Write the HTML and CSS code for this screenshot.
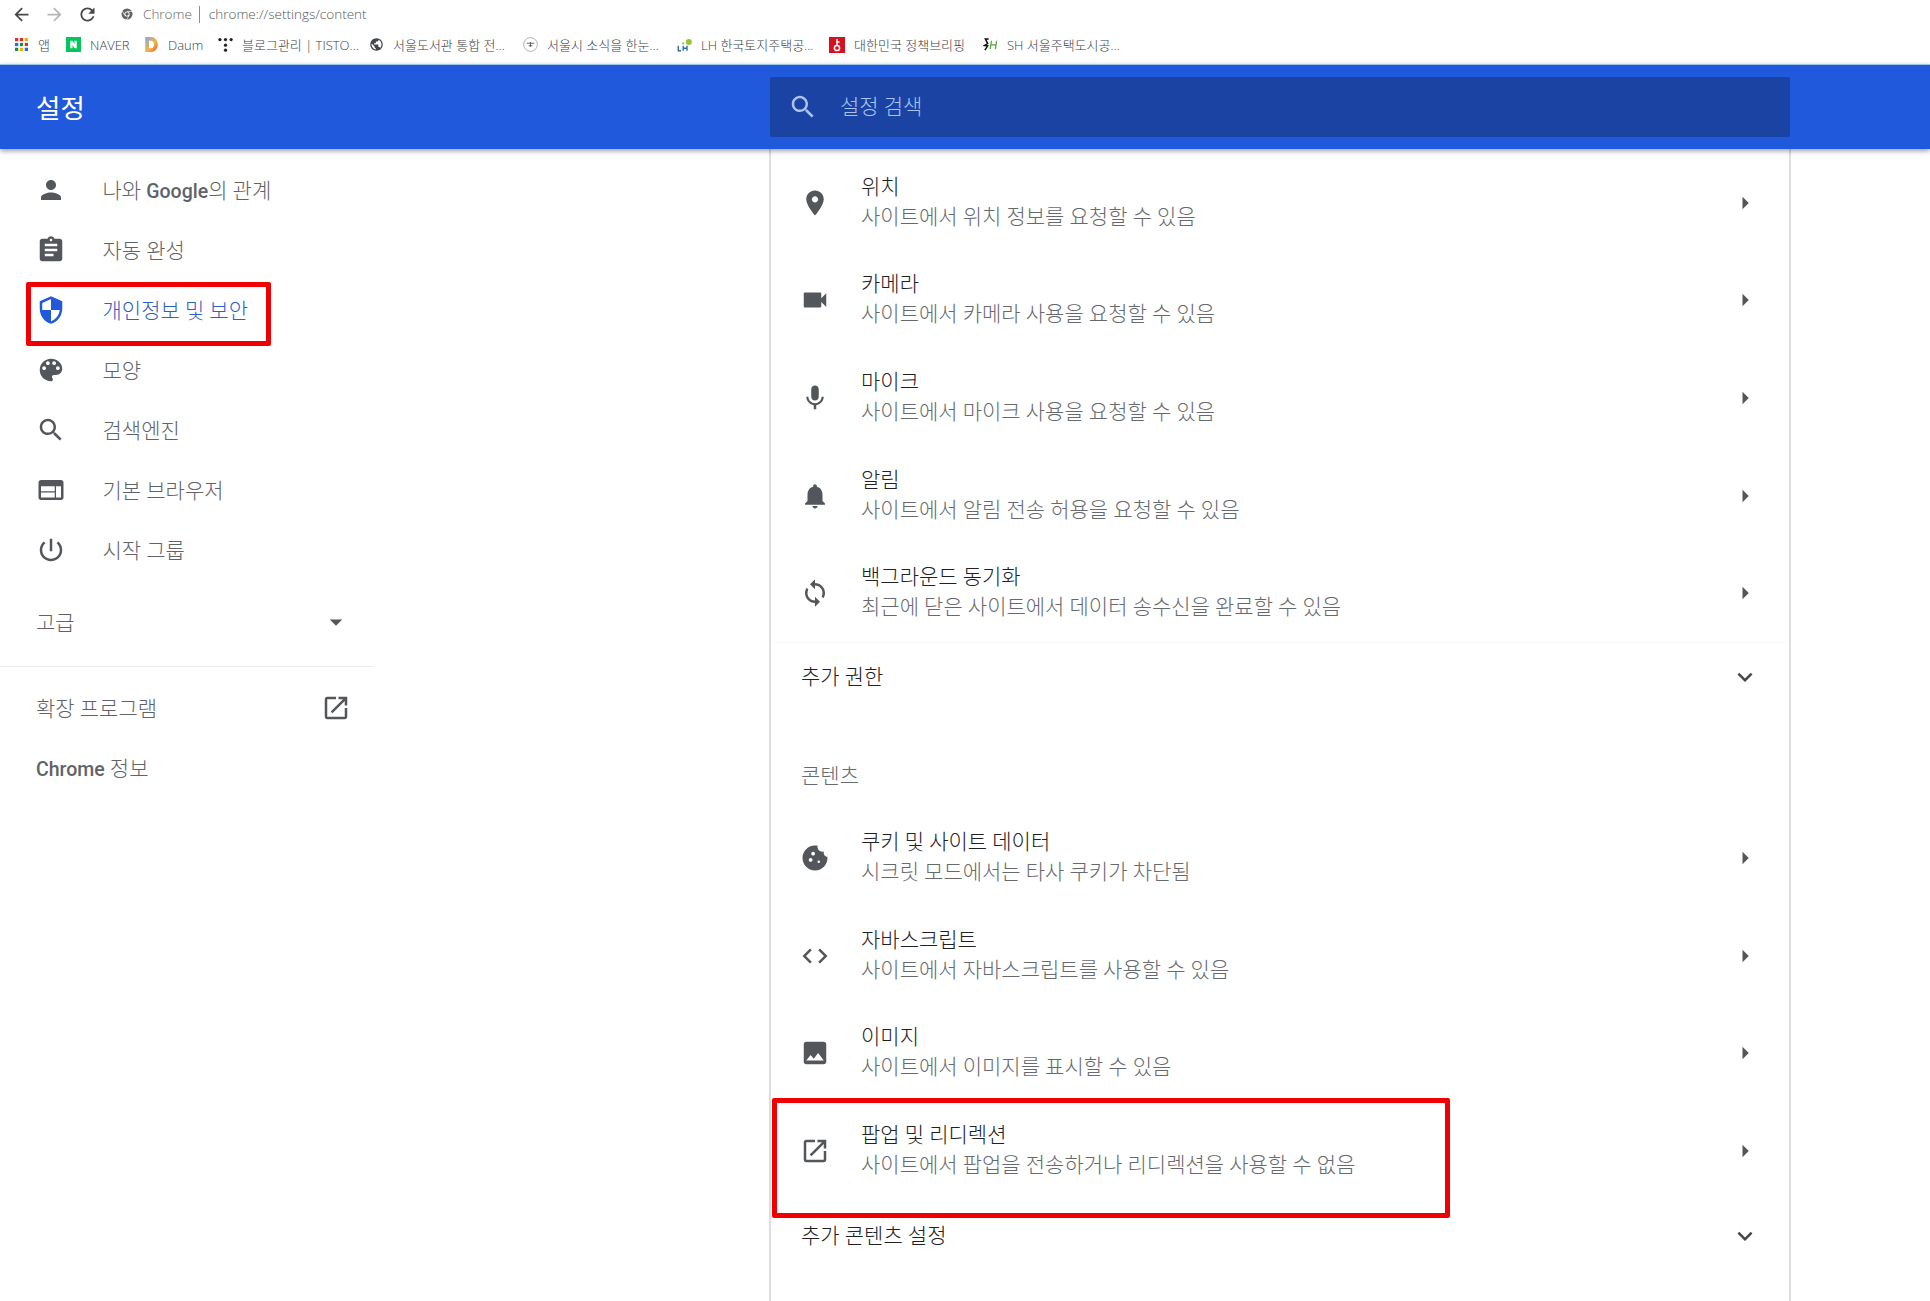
FILE: index.html
```html
<!DOCTYPE html>
<html lang="ko">
<head>
<meta charset="utf-8">
<title>설정</title>
<link rel="stylesheet" href="styles.css">
</head>
<body>
<div class="addressbar">
  <svg class="nav-ic" viewBox="0 0 24 24"><path d="M20 11H7.83l5.59-5.59L12 4l-8 8 8 8 1.41-1.41L7.83 13H20v-2z"/></svg>
  <svg class="nav-ic nav-off" viewBox="0 0 24 24"><path d="M12 4l-1.41 1.41L16.17 11H4v2h12.17l-5.58 5.59L12 20l8-8z"/></svg>
  <svg class="nav-ic" viewBox="0 0 24 24"><path d="M17.65 6.35C16.2 4.9 14.21 4 12 4c-4.42 0-7.99 3.58-7.99 8s3.57 8 7.99 8c3.73 0 6.84-2.55 7.73-6h-2.08c-.82 2.33-3.04 4-5.65 4-3.31 0-6-2.69-6-6s2.69-6 6-6c1.66 0 3.14.69 4.22 1.78L13 11h7V4l-2.35 2.35z"/></svg>
  <svg class="site-ic" viewBox="0 0 24 24"><circle cx="12" cy="12" r="11" fill="#5f6368"/><circle cx="12" cy="12" r="5.200" fill="#fff"/><circle cx="12" cy="12" r="3.400" fill="#5f6368"/><path d="M12 6.800h10.500M7.500 14.600L2.300 5.600M16.500 14.600L11.300 23.500" stroke="#fff" stroke-width="1.400"/></svg>
  <span class="site-name">Chrome</span>
  <span class="site-sep"></span>
  <span class="url">chrome://settings/content</span>
</div>
<div class="bookmarks">
  <span class="bm bm-apps">
    <svg class="fav fav-apps" viewBox="0 0 12 12"><rect x="0" y="0" width="3" height="3" fill="#d93025"/><rect x="4.500" y="0" width="3" height="3" fill="#d93025"/><rect x="9" y="0" width="3" height="3" fill="#f9ab00"/><rect x="0" y="4.500" width="3" height="3" fill="#1a73e8"/><rect x="4.500" y="4.500" width="3" height="3" fill="#1e8e3e"/><rect x="9" y="4.500" width="3" height="3" fill="#d93025"/><rect x="0" y="9" width="3" height="3" fill="#1e8e3e"/><rect x="4.500" y="9" width="3" height="3" fill="#f9ab00"/><rect x="9" y="9" width="3" height="3" fill="#1a73e8"/></svg>
    앱</span>
  <span class="bm bm-naver">
    <svg class="fav" viewBox="0 0 12 12"><rect width="12" height="12" fill="#03c75a"/><path d="M3.400 3h1.800l1.600 2.600V3h1.800v6H6.800L5.200 6.400V9H3.400z" fill="#fff"/></svg>
    NAVER</span>
  <span class="bm bm-daum">
    <svg class="fav" viewBox="0 0 12 12"><defs><linearGradient id="dg" x1="0" y1="0" x2="1" y2="1"><stop offset="0" stop-color="#7ea6ef"/><stop offset=".55" stop-color="#f4b53f"/><stop offset="1" stop-color="#e8574a"/></linearGradient></defs><path fill-rule="evenodd" d="M1 0h4.500C9 0 11 2.600 11 6s-2 6-5.500 6H1zM4 3v6h1.400C7 9 8 7.700 8 6S7 3 5.400 3z" fill="url(#dg)"/></svg>
    Daum</span>
  <span class="bm bm-tistory">
    <svg class="fav" viewBox="0 0 12 12" fill="#222"><circle cx="1.500" cy="2" r="1.300"/><circle cx="6" cy="2" r="1.300"/><circle cx="10.500" cy="2" r="1.300"/><circle cx="6" cy="6.500" r="1.300"/><circle cx="6" cy="10.500" r="1.300"/></svg>
    블로그관리 | TISTO...</span>
  <span class="bm bm-lib">
    <svg class="fav" viewBox="0 0 24 24"><path fill="#44474a" d="M12 2C6.480 2 2 6.480 2 12s4.480 10 10 10 10-4.480 10-10S17.520 2 12 2zm-1 17.930C7.050 19.440 4 16.080 4 12c0-.62.080-1.210.21-1.790L9 15v1c0 1.100.9 2 2 2v1.930zm6.900-2.540c-.26-.81-1-1.390-1.900-1.390h-1v-3c0-.55-.45-1-1-1H8v-2h2c.55 0 1-.45 1-1V7h2c1.100 0 2-.9 2-2v-.41c2.930 1.190 5 4.060 5 7.410 0 2.080-.8 3.970-2.100 5.390z"/></svg>
    서울도서관 통합 전...</span>
  <span class="bm bm-seoul">
    <svg class="fav" viewBox="0 0 24 24"><circle cx="12" cy="12" r="11" fill="none" stroke="#9a9a9a" stroke-width="1.200"/><path d="M6 10h12M9 14h6M12 8v8" stroke="#555" stroke-width="1.400"/></svg>
    서울시 소식을 한눈...</span>
  <span class="bm bm-lh">
    <svg class="fav" viewBox="0 0 12 12"><circle cx="9.500" cy="4" r="2.400" fill="#9ac531"/><circle cx="5" cy="5" r=".9" fill="#9ac531"/><path d="M1 7v4h2.200M5 7v4M8 7v4M5 9h3" stroke="#2a6ca8" stroke-width="1.100" fill="none"/></svg>
    LH 한국토지주택공...</span>
  <span class="bm bm-korea">
    <svg class="fav" viewBox="0 0 16 16"><rect width="16" height="16" fill="#d5111f"/><circle cx="8" cy="11" r="2.600" fill="none" stroke="#fff" stroke-width="1.500"/><path d="M8 2v6M8 5h2.500" stroke="#fff" stroke-width="1.500"/></svg>
    대한민국 정책브리핑</span>
  <span class="bm bm-sh">
    <svg class="fav" viewBox="0 0 16 14"><path d="M6 1H2.500L5 6 1.500 8 5 8.500 2 13" fill="none" stroke="#111" stroke-width="1.600"/><path d="M9 3l-1.300 9M14.500 3l-1.300 9M8.300 7.500h5.500" stroke="#4aa63a" stroke-width="1.300"/></svg>
    SH 서울주택도시공...</span>
</div>
<header class="topbar">
  <h1 class="topbar-title">설정</h1>
  <div class="searchbox">
    <svg class="search-ic" viewBox="0 0 24 24"><path d="M15.500 14h-.79l-.28-.27C15.410 12.590 16 11.110 16 9.500 16 5.910 13.090 3 9.500 3S3 5.910 3 9.500 5.910 16 9.500 16c1.610 0 3.090-.59 4.230-1.570l.27.28v.79l5 4.990L20.490 19l-4.990-5zm-6 0C7.010 14 5 11.990 5 9.500S7.010 5 9.500 5 14 7.010 14 9.500 11.990 14 9.500 14z"/></svg>
    <span class="search-ph">설정 검색</span>
  </div>
</header>
<div class="main">
  <nav class="sidebar">
    <a class="side-item">
      <svg class="ic" viewBox="0 0 24 24"><path d="M12 12c2.210 0 4-1.790 4-4s-1.790-4-4-4-4 1.790-4 4 1.790 4 4 4zm0 2c-2.670 0-8 1.340-8 4v2h16v-2c0-2.660-5.330-4-8-4z"/></svg>
      <span class="side-text">나와 <b class="latin">Google</b>의 관계</span>
    </a>
    <a class="side-item">
      <svg class="ic" viewBox="0 0 24 24"><path d="M19 3h-4.180C14.400 1.840 13.300 1 12 1c-1.300 0-2.400.84-2.820 2H5c-1.100 0-2 .9-2 2v14c0 1.100.9 2 2 2h14c1.100 0 2-.9 2-2V5c0-1.100-.9-2-2-2zm-7 0c.55 0 1 .45 1 1s-.45 1-1 1-1-.45-1-1 .45-1 1-1zm2 14H7v-2h7v2zm3-4H7v-2h10v2zm0-4H7V7h10v2z"/></svg>
      <span class="side-text">자동 완성</span>
    </a>
    <a class="side-item side-active">
      <svg class="ic" viewBox="0 0 24 24"><path d="M12 1L3 5v6c0 5.550 3.840 10.740 9 12 5.160-1.260 9-6.450 9-12V5l-9-4zm0 10.990h7c-.53 4.120-3.280 7.790-7 8.940V12H5V6.300l7-3.110v8.800z"/></svg>
      <span class="side-text">개인정보 및 보안</span>
    </a>
    <a class="side-item">
      <svg class="ic" viewBox="0 0 24 24"><path d="M12 3c-4.970 0-9 4.030-9 9s4.030 9 9 9c.83 0 1.500-.67 1.500-1.500 0-.39-.15-.74-.39-1.010-.23-.26-.38-.61-.38-.99 0-.83.67-1.500 1.500-1.500H16c2.760 0 5-2.240 5-5 0-4.420-4.030-8-9-8zm-5.500 9c-.83 0-1.500-.67-1.500-1.500S5.670 9 6.500 9 8 9.670 8 10.500 7.330 12 6.500 12zm3-4C8.670 8 8 7.330 8 6.500S8.670 5 9.500 5s1.500.67 1.500 1.500S10.330 8 9.500 8zm5 0c-.83 0-1.500-.67-1.500-1.500S13.670 5 14.500 5s1.500.67 1.500 1.500S15.330 8 14.500 8zm3 4c-.83 0-1.500-.67-1.500-1.500S16.670 9 17.500 9s1.500.67 1.500 1.500-.67 1.500-1.500 1.500z"/></svg>
      <span class="side-text">모양</span>
    </a>
    <a class="side-item">
      <svg class="ic" viewBox="0 0 24 24"><path d="M15.500 14h-.79l-.28-.27C15.410 12.590 16 11.110 16 9.500 16 5.910 13.090 3 9.500 3S3 5.910 3 9.500 5.910 16 9.500 16c1.610 0 3.090-.59 4.230-1.570l.27.28v.79l5 4.990L20.490 19l-4.990-5zm-6 0C7.010 14 5 11.990 5 9.500S7.010 5 9.500 5 14 7.010 14 9.500 11.990 14 9.500 14z"/></svg>
      <span class="side-text">검색엔진</span>
    </a>
    <a class="side-item">
      <svg class="ic" viewBox="0 0 24 24"><path d="M20 4H4c-1.100 0-1.990.9-1.990 2L2 18c0 1.100.9 2 2 2h16c1.100 0 2-.9 2-2V6c0-1.100-.9-2-2-2zm-5 14H4v-4h11v4zm0-5H4V9h11v4zm5 5h-4V9h4v9z"/></svg>
      <span class="side-text">기본 브라우저</span>
    </a>
    <a class="side-item">
      <svg class="ic" viewBox="0 0 24 24"><path d="M13 3h-2v10h2V3zm4.830 2.170l-1.420 1.420C17.990 7.860 19 9.810 19 12c0 3.870-3.130 7-7 7s-7-3.130-7-7c0-2.190 1.010-4.140 2.580-5.420L6.170 5.170C4.230 6.820 3 9.260 3 12c0 4.970 4.030 9 9 9s9-4.030 9-9c0-2.740-1.230-5.180-3.170-6.830z"/></svg>
      <span class="side-text">시작 그룹</span>
    </a>
    <a class="side-link side-advanced">
      <span class="side-text">고급</span>
      <svg class="ic" viewBox="0 0 24 24"><path d="M7 10l5 5 5-5z"/></svg>
    </a>
    <div class="side-divider"></div>
    <a class="side-link">
      <span class="side-text">확장 프로그램</span>
      <svg class="ic" viewBox="0 0 24 24"><path d="M19 19H5V5h7V3H5c-1.110 0-2 .9-2 2v14c0 1.100.89 2 2 2h14c1.100 0 2-.9 2-2v-7h-2v7zM14 3v2h3.590l-9.830 9.830 1.410 1.410L19 6.410V10h2V3h-7z"/></svg>
    </a>
    <a class="side-link">
      <span class="side-text"><b class="latin">Chrome</b> 정보</span>
    </a>
  </nav>
  <section class="card">
    <div class="row">
      <svg class="ic" viewBox="0 0 24 24"><path d="M12 2C8.130 2 5 5.130 5 9c0 5.250 7 13 7 13s7-7.750 7-13c0-3.870-3.130-7-7-7zm0 9.500c-1.380 0-2.500-1.120-2.500-2.500s1.120-2.500 2.500-2.500 2.500 1.120 2.500 2.500-1.120 2.500-2.500 2.500z"/></svg>
      <div class="row-text"><div class="row-title">위치</div><div class="row-sub">사이트에서 위치 정보를 요청할 수 있음</div></div>
      <svg class="ic" viewBox="0 0 24 24"><path d="M10 17l5-5-5-5z"/></svg>
    </div>
    <div class="row">
      <svg class="ic" viewBox="0 0 24 24"><path d="M17 10.500V7c0-.55-.45-1-1-1H4c-.55 0-1 .45-1 1v10c0 .55.45 1 1 1h12c.55 0 1-.45 1-1v-3.500l4 4v-11l-4 4z"/></svg>
      <div class="row-text"><div class="row-title">카메라</div><div class="row-sub">사이트에서 카메라 사용을 요청할 수 있음</div></div>
      <svg class="ic" viewBox="0 0 24 24"><path d="M10 17l5-5-5-5z"/></svg>
    </div>
    <div class="row">
      <svg class="ic" viewBox="0 0 24 24"><path d="M12 14c1.660 0 2.990-1.340 2.990-3L15 5c0-1.660-1.340-3-3-3S9 3.340 9 5v6c0 1.660 1.340 3 3 3zm5.300-3c0 3-2.540 5.100-5.300 5.100S6.700 14 6.700 11H5c0 3.410 2.720 6.230 6 6.720V21h2v-3.280c3.280-.48 6-3.300 6-6.720h-1.700z"/></svg>
      <div class="row-text"><div class="row-title">마이크</div><div class="row-sub">사이트에서 마이크 사용을 요청할 수 있음</div></div>
      <svg class="ic" viewBox="0 0 24 24"><path d="M10 17l5-5-5-5z"/></svg>
    </div>
    <div class="row">
      <svg class="ic" viewBox="0 0 24 24"><path d="M12 22c1.100 0 2-.9 2-2h-4c0 1.100.89 2 2 2zm6-6v-5c0-3.070-1.640-5.640-4.500-6.320V4c0-.83-.67-1.500-1.500-1.500s-1.500.67-1.500 1.500v.68C7.630 5.360 6 7.920 6 11v5l-2 2v1h16v-1l-2-2z"/></svg>
      <div class="row-text"><div class="row-title">알림</div><div class="row-sub">사이트에서 알림 전송 허용을 요청할 수 있음</div></div>
      <svg class="ic" viewBox="0 0 24 24"><path d="M10 17l5-5-5-5z"/></svg>
    </div>
    <div class="row">
      <svg class="ic" viewBox="0 0 24 24"><path d="M12 4V1L8 5l4 4V6c3.310 0 6 2.690 6 6 0 1.010-.25 1.970-.7 2.800l1.460 1.460C19.540 15.030 20 13.570 20 12c0-4.420-3.580-8-8-8zm0 14c-3.310 0-6-2.690-6-6 0-1.010.25-1.970.7-2.800L5.240 7.740C4.460 8.970 4 10.430 4 12c0 4.420 3.580 8 8 8v3l4-4-4-4v3z"/></svg>
      <div class="row-text"><div class="row-title">백그라운드 동기화</div><div class="row-sub">최근에 닫은 사이트에서 데이터 송수신을 완료할 수 있음</div></div>
      <svg class="ic" viewBox="0 0 24 24"><path d="M10 17l5-5-5-5z"/></svg>
    </div>
    <div class="expand expand-first">
      <span class="expand-text">추가 권한</span>
      <svg class="ic" viewBox="0 0 24 24"><path d="M16.590 8.590L12 13.170 7.410 8.590 6 10l6 6 6-6z"/></svg>
    </div>
    <h2 class="section-head">콘텐츠</h2>
    <div class="row">
      <svg class="ic" viewBox="0 0 24 24"><path d="M21.950 10.990c-1.790-.03-3.700-1.950-2.680-4.220-2.970 1-5.780-1.590-5.190-4.560C7.110.74 2 6.410 2 12c0 5.520 4.480 10 10 10 5.890 0 10.540-5.080 9.950-11.010zM8.500 15c-.83 0-1.500-.67-1.500-1.500S7.670 12 8.500 12s1.500.67 1.500 1.500S9.330 15 8.500 15zm2-5C9.670 10 9 9.330 9 8.500S9.670 7 10.500 7s1.500.67 1.500 1.500-.67 1.500-1.500 1.500zm4.500 6c-.55 0-1-.45-1-1s.45-1 1-1 1 .45 1 1-.45 1-1 1z"/></svg>
      <div class="row-text"><div class="row-title">쿠키 및 사이트 데이터</div><div class="row-sub">시크릿 모드에서는 타사 쿠키가 차단됨</div></div>
      <svg class="ic" viewBox="0 0 24 24"><path d="M10 17l5-5-5-5z"/></svg>
    </div>
    <div class="row">
      <svg class="ic" viewBox="0 0 24 24"><path d="M9.400 16.600L4.800 12l4.600-4.600L8 6l-6 6 6 6 1.400-1.400zm5.200 0l4.600-4.600-4.600-4.600L16 6l6 6-6 6-1.400-1.400z"/></svg>
      <div class="row-text"><div class="row-title">자바스크립트</div><div class="row-sub">사이트에서 자바스크립트를 사용할 수 있음</div></div>
      <svg class="ic" viewBox="0 0 24 24"><path d="M10 17l5-5-5-5z"/></svg>
    </div>
    <div class="row">
      <svg class="ic" viewBox="0 0 24 24"><path d="M21 19V5c0-1.100-.9-2-2-2H5c-1.100 0-2 .9-2 2v14c0 1.100.9 2 2 2h14c1.100 0 2-.9 2-2zM8.500 13.500l2.500 3.010L14.500 12l4.500 6H5l3.500-4.500z"/></svg>
      <div class="row-text"><div class="row-title">이미지</div><div class="row-sub">사이트에서 이미지를 표시할 수 있음</div></div>
      <svg class="ic" viewBox="0 0 24 24"><path d="M10 17l5-5-5-5z"/></svg>
    </div>
    <div class="row row-marked">
      <svg class="ic" viewBox="0 0 24 24"><path d="M19 19H5V5h7V3H5c-1.110 0-2 .9-2 2v14c0 1.100.89 2 2 2h14c1.100 0 2-.9 2-2v-7h-2v7zM14 3v2h3.590l-9.830 9.830 1.410 1.410L19 6.410V10h2V3h-7z"/></svg>
      <div class="row-text"><div class="row-title">팝업 및 리디렉션</div><div class="row-sub">사이트에서 팝업을 전송하거나 리디렉션을 사용할 수 없음</div></div>
      <svg class="ic" viewBox="0 0 24 24"><path d="M10 17l5-5-5-5z"/></svg>
    </div>
    <div class="expand expand-last">
      <span class="expand-text">추가 콘텐츠 설정</span>
      <svg class="ic" viewBox="0 0 24 24"><path d="M16.590 8.590L12 13.170 7.410 8.590 6 10l6 6 6-6z"/></svg>
    </div>
  </section>
</div>
</body>
</html>
```

FILE: styles.css
```css
* { box-sizing: border-box; }
html, body { margin: 0; padding: 0; }
body {
  width: 1930px;
  height: 1301px;
  overflow: hidden;
  background: #fff;
  color: #5f6368;
  font-family: Roboto, "Noto Sans CJK KR", sans-serif;
  font-weight: 300;
}

/* Browser chrome */
.addressbar {
  display: flex;
  align-items: center;
  height: 28px;
  padding-left: 10.500px;
}
.nav-ic { width: 21px; height: 21px; fill: #44474a; margin-right: 12px; flex: none; }
.nav-ic.nav-off { fill: #b4b6b9; }
.site-ic { width: 12px; height: 12px; margin-left: 11.500px; margin-right: 10px; flex: none; }
.site-name, .url { font-family: "Open Sans", "Noto Sans CJK KR", sans-serif; font-size: 13.500px; color: #5f6368; }
.url { color: #55585c; }
.site-sep { width: 1px; height: 17px; background: #8a8d90; margin: 0 9px 0 7px; }

.bookmarks {
  display: flex;
  align-items: center;
  height: 36px;
  padding: 0 0 3px 14px;
  font-family: "Open Sans", "Noto Sans CJK KR", sans-serif;
  font-size: 13px;
  color: #3c4043;
  font-weight: 300;
}
.bm { display: inline-flex; align-items: center; gap: 9px; white-space: nowrap; flex: none; }
.fav { width: 15px; height: 15px; flex: none; }
.fav-apps { width: 13px; height: 13px; margin: 0 1px; }
.bm-apps { width: 52px; }
.bm-naver { width: 78px; }
.bm-daum { width: 74px; }
.bm-tistory { width: 151px; }
.bm-lib { width: 154px; }
.bm-seoul { width: 154px; }
.bm-lh { width: 152px; }
.bm-korea { width: 154px; }
.bm-korea .fav { width: 16px; height: 16px; }

/* Blue settings toolbar */
.topbar {
  position: relative;
  z-index: 2;
  display: flex;
  align-items: center;
  height: 85px;
  background: #2159dc;
  border-top: 1px solid #9fc5ea;
  box-shadow: 0 2px 5px rgba(30, 40, 70, .45);
}
.topbar-title {
  width: 770px;
  margin: 0;
  padding: 0 0 2px 36px;
  font-size: 26.500px;
  font-weight: 400;
  color: #fff;
}
.searchbox {
  display: flex;
  align-items: center;
  width: 1020px;
  height: 60px;
  background: #1a43a4;
  border-radius: 2px;
  padding-left: 18px;
}
.search-ic { width: 30px; height: 30px; fill: #a9c4f0; flex: none; margin-bottom: 1px; }
.search-ph { margin-left: 22px; padding-bottom: 4px; font-size: 21px; color: #a9c4f0; }

/* Layout */
.main { display: flex; align-items: flex-start; }
.sidebar { width: 374px; flex: none; padding-top: 11px; font-size: 21px; }
.ic { width: 30px; height: 30px; fill: #53565a; flex: none; }
.latin { font-size: 19.500px; font-weight: 500; }
.side-text { padding-bottom: 2px; }

.side-item {
  position: relative;
  display: flex;
  align-items: center;
  gap: 36.500px;
  height: 60px;
  padding-left: 36px;
}
.side-active { color: #2f5fc4; }
.side-active .ic { fill: #2159dc; }
.side-active::after {
  content: "";
  box-sizing: border-box;
  position: absolute;
  left: 26px;
  top: 2px;
  width: 245px;
  height: 64px;
  border: 5px solid #f00000;
  border-radius: 2px;
}
.side-link {
  display: flex;
  align-items: center;
  justify-content: space-between;
  height: 60px;
  padding: 0 23px 0 36px;
}
.side-advanced { margin-top: 12px; }
.side-divider { height: 1px; background: #ececec; margin: 14px 0 11px; }

/* Content card */
.card {
  width: 1022px;
  height: 1152px;
  flex: none;
  margin-left: 395px;
  padding-top: 5px;
  border-left: 2px solid #dedede;
  border-right: 2px solid #dedede;
}
.row {
  position: relative;
  display: flex;
  align-items: center;
  height: 97.600px;
  padding: 0 29px;
}
.row-text { flex: 1; margin-left: 31px; padding-bottom: 2px; }
.row-title { font-size: 21px; line-height: 30px; color: #202124; }
.row-sub { font-size: 21px; line-height: 30px; color: #66696d; }
.row-marked::after {
  content: "";
  box-sizing: border-box;
  position: absolute;
  left: 1px;
  top: -4px;
  width: 678px;
  height: 120px;
  border: 5px solid #f00000;
  border-radius: 2px;
}
.expand {
  display: flex;
  align-items: center;
  justify-content: space-between;
  height: 69px;
  padding: 0 29px 0 30px;
  font-size: 21px;
  color: #202124;
}
.expand-last { height: 72px; }
.expand-text { padding-bottom: 3px; }
.expand-first { border-top: 1px solid #f8f8f8; }
.expand .ic { fill: #44474a; }
.section-head {
  margin: 0;
  height: 98.500px;
  padding: 47px 0 0 30px;
  font-size: 21px;
  line-height: 36px;
  font-weight: 300;
  color: #66696d;
}
```
